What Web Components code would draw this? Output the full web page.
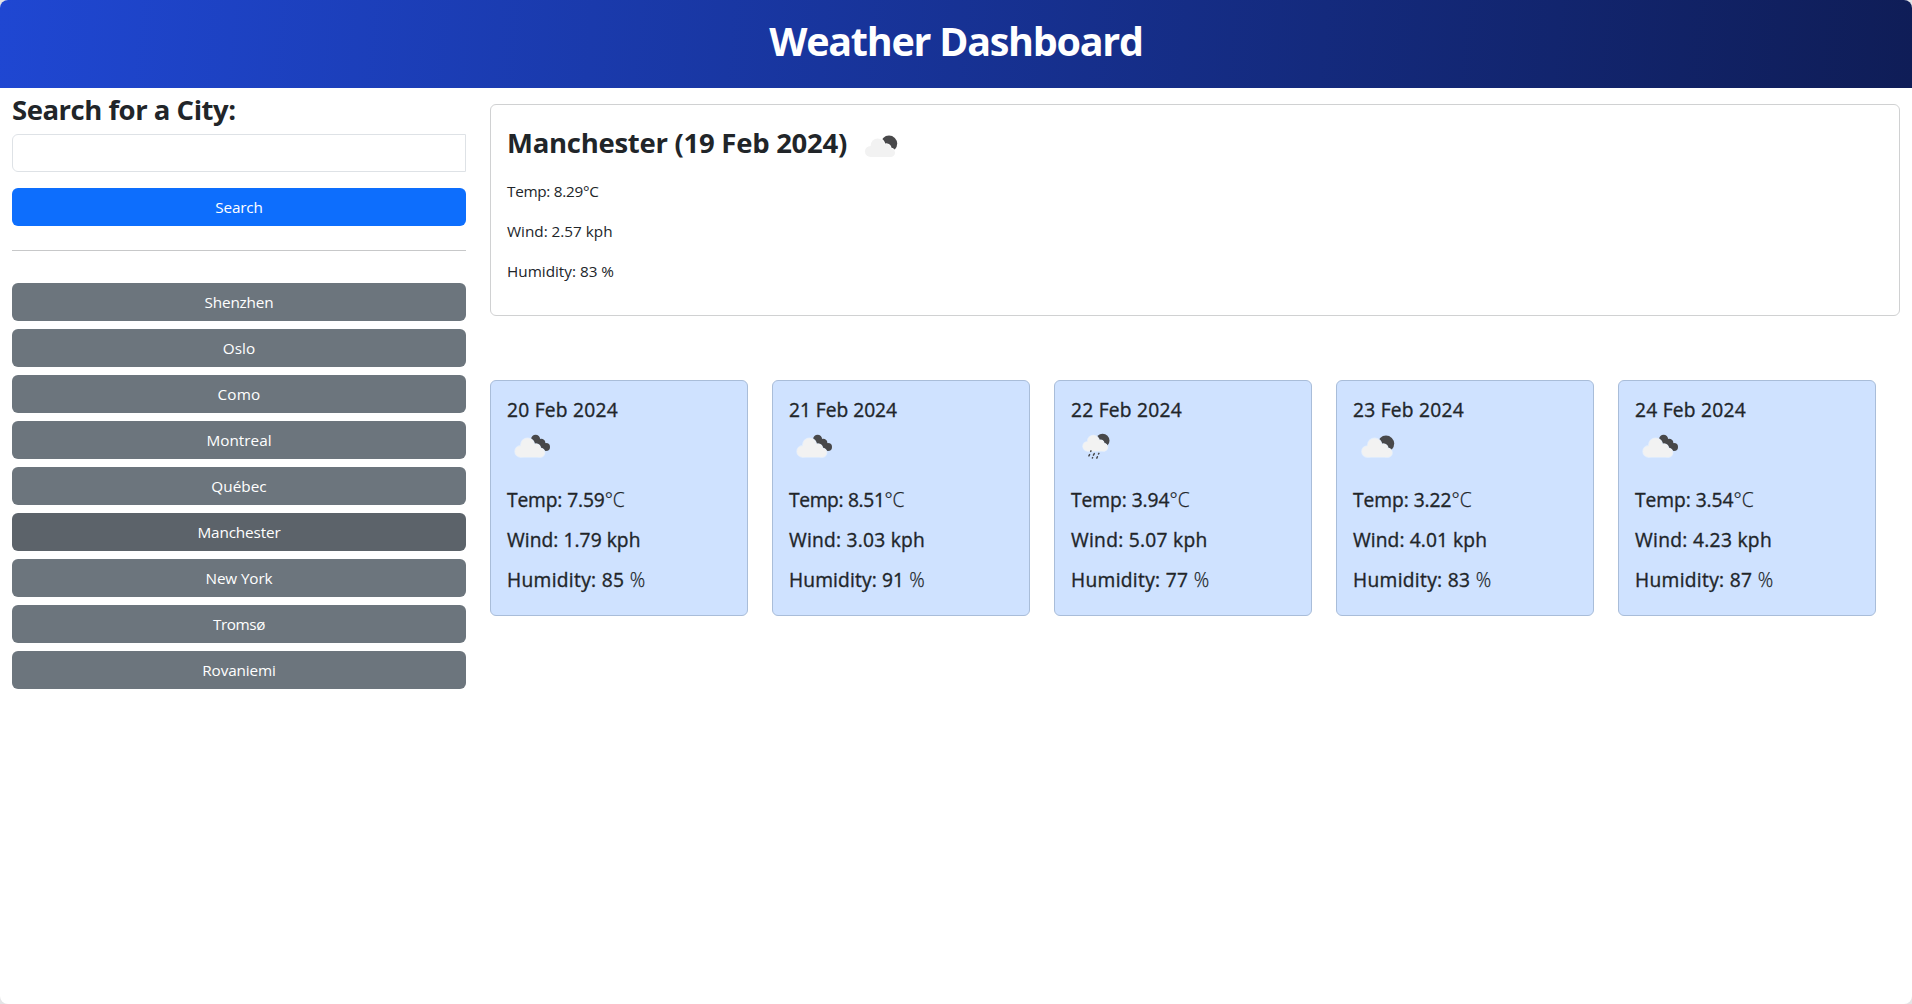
<!DOCTYPE html>
<html lang="en">
<head>
<meta charset="utf-8">
<title>Weather Dashboard</title>
<style>
html{background:#e4e4e6}
body{margin:0;font-family:"Open Sans","Noto Sans",sans-serif;font-size:15.3px;line-height:24px;color:#212529}
</style>
</head>
<body>
<weather-app></weather-app>
<script>
// <fit-text w="120">: a run of text tracked so that its advance equals w pixels.
class FitText extends HTMLElement{
  constructor(){super();this.attachShadow({mode:'open'}).innerHTML='<style>:host{display:inline-block;white-space:pre}</style><slot></slot>';}
  connectedCallback(){
    const w=parseFloat(this.getAttribute('w'));
    const n=this.textContent.length;
    if(!w||!n)return;
    const now=this.getBoundingClientRect().width;
    this.style.letterSpacing=((w-now)/n).toFixed(4)+'px';
  }
}
class WeatherIcon extends HTMLElement{
  connectedCallback(){
    const lobes='<circle cx="12.6" cy="30.4" r="5.5"/><circle cx="19.6" cy="24.1" r="6.8"/><circle cx="28" cy="27.4" r="4.4"/><circle cx="32.2" cy="31.6" r="4.4"/><path d="M12.6 26h14l6 5v5h-20z"/>';
    const cloud=t=>`<g transform="${t}"><g fill="var(--halo)" stroke="var(--halo)" stroke-width="1.6">${lobes}</g><g fill="#f2f2f2">${lobes}</g></g>`;
    const shapes={
      broken:`<g fill="#48484a"><circle cx="27.6" cy="18.2" r="4.5"/><circle cx="33.2" cy="21.9" r="4.2"/><circle cx="38" cy="26.1" r="4"/><path d="M24 20l12-1 2 9-6 1z"/></g>${cloud('')}`,
      few:`<circle cx="32" cy="22.8" r="8.2" fill="#48484a"/>${cloud('translate(.7 .2) scale(1.02 .995)')}`,
      rain:`<circle cx="30.6" cy="19.7" r="6.9" fill="#48484a"/>${cloud('translate(5 -.1) scale(.835)')}<path d="M19 29.8l-.3.6M22.3 32.6l-.9 1.6M26.9 32.3l-.4.7M17.6 33.6l-.7 1.3M25.4 35.8l-.6 1.3M20.6 36.6l-.2.4" stroke="#48484a" stroke-width="1.5" stroke-linecap="round"/>`
    };
    this.attachShadow({mode:'open'}).innerHTML=`<style>:host{display:block;width:50px;height:50px;flex:none}svg{display:block}</style><svg width="50" height="50" viewBox="0 0 50 50">${shapes[this.getAttribute('kind')]}</svg>`;
  }
}
class PageBanner extends HTMLElement{
  connectedCallback(){this.attachShadow({mode:'open'}).innerHTML=`<style>
:host{display:flex;height:88px;box-sizing:border-box;justify-content:center;padding-top:15px;background:linear-gradient(95deg,#1f47d2,#0f1d57);color:#fff}
h1{margin:0;font-size:39.5px;line-height:53px;font-weight:700}</style><h1><slot></slot></h1>`;}
}
class CityButton extends HTMLElement{
  connectedCallback(){this.attachShadow({mode:'open'}).innerHTML=`<style>
:host{display:block}
button{display:block;width:100%;height:38px;border:0;border-radius:6px;padding:0 0 1px;font:inherit;line-height:24px;color:#fff;background:#6c757d}
:host([active]) button{background:#5c636a}
:host([primary]) button{background:#0d6efd}</style><button><slot></slot></button>`;}
}
class CitySearch extends HTMLElement{
  connectedCallback(){
    const cities=[['Shenzhen',69],['Oslo',32.5],['Como',43],['Montreal',65],['Québec',55.5],['Manchester',83],['New York',67],['Tromsø',52],['Rovaniemi',73.5]];
    this.attachShadow({mode:'open'}).innerHTML=`<style>
:host{display:flex;flex-direction:column;width:454px;flex:none}
h2{margin:5px 0 7px;font-size:27.5px;line-height:34px;font-weight:700}
input{display:block;box-sizing:border-box;width:100%;height:38px;border:1px solid #dee2e6;border-radius:6px 0 0 6px;padding:6px 12px;font:inherit;background:#fff}
.go{margin-top:16px}
hr{width:100%;margin:24px 0 32px;border:0;border-top:1px solid #c7c8c9}
.list{display:flex;flex-direction:column;gap:8px}</style>
<h2><fit-text w="223.5">Search for a City:</fit-text></h2><input aria-label="City">
<city-button class="go" primary><fit-text w="47.5">Search</fit-text></city-button><hr>
<div class="list">${cities.map(c=>`<city-button${c[0]==='Manchester'?' active':''}><fit-text w="${c[1]}">${c[0]}</fit-text></city-button>`).join('')}</div>`;
  }
}
class TodayCard extends HTMLElement{
  connectedCallback(){this.attachShadow({mode:'open'}).innerHTML=`<style>
:host{display:block;box-sizing:border-box;height:212px;border:1px solid #d0d1d2;border-radius:6px;padding:16px;--halo:#fff}
.head{display:flex;height:50px;gap:10px}
h2{margin:5px 0 0;font-size:27.5px;line-height:34px;font-weight:700}
p{margin:0 0 16px;font-weight:400;line-height:24px}
.rows{margin-top:8px}</style>
<div class="head"><h2><fit-text w="340">Manchester (19 Feb 2024)</fit-text></h2><weather-icon kind="few"></weather-icon></div>
<div class="rows"><p><fit-text w="91.5">Temp: 8.29°C</fit-text></p><p><fit-text w="105.5">Wind: 2.57 kph</fit-text></p><p><fit-text w="107">Humidity: 83 %</fit-text></p></div>`;}
}
class DayCard extends HTMLElement{
  connectedCallback(){
    const [date,kind,temp,wind,hum]=this.getAttribute('data').split('|');
    const [dw,tw,ww,hw]=this.getAttribute('widths').split(' ');
    this.attachShadow({mode:'open'}).innerHTML=`<style>
:host{display:block;box-sizing:border-box;width:258px;height:236px;border:1px solid #a9bdd9;border-radius:6px;padding:17px 16px 15px;background:#cfe2ff;--halo:#e4eefc;font-size:19.2px;font-weight:500;-webkit-text-stroke:.35px #212529}
h5{margin:0;font:inherit;line-height:24px}
p{margin:0 0 16px;line-height:24px}
weather-icon{margin:-1px 0 17px 1px}
.u{font-weight:300;-webkit-text-stroke:.25px #212529}</style>
<h5><fit-text w="${dw}">${date}</fit-text></h5><weather-icon kind="${kind}"></weather-icon>
<p><fit-text w="${tw}">Temp: ${temp}<span class="u">°C</span></fit-text></p>
<p><fit-text w="${ww}">Wind: ${wind} kph</fit-text></p>
<p><fit-text w="${hw}">Humidity: ${hum} <span class="u">%</span></fit-text></p>`;
  }
}
class WeatherApp extends HTMLElement{
  connectedCallback(){
    this.attachShadow({mode:'open'}).innerHTML=`<style>
:host{display:block;height:1004px;box-sizing:border-box;background:#fff;border-radius:8px;overflow:hidden}
.body{display:flex;gap:24px;padding:0 12px}
main{flex:1;min-width:0;padding-top:16px}
.days{display:flex;gap:24px;margin-top:64px}</style>
<page-banner><fit-text w="373.5">Weather Dashboard</fit-text></page-banner>
<div class="body"><city-search></city-search><main><today-card></today-card><div class="days">
<day-card data="20 Feb 2024|broken|7.59|1.79|85" widths="111 117.5 133.5 138.5"></day-card>
<day-card data="21 Feb 2024|broken|8.51|3.03|91" widths="108 115 136 136"></day-card>
<day-card data="22 Feb 2024|rain|3.94|5.07|77" widths="111 118.5 136.5 138.5"></day-card>
<day-card data="23 Feb 2024|few|3.22|4.01|83" widths="111 118.5 134 138.5"></day-card>
<day-card data="24 Feb 2024|broken|3.54|4.23|87" widths="111 118.5 137 138.5"></day-card>
</div></main></div>`;
  }
}
[['weather-icon',WeatherIcon],['page-banner',PageBanner],['city-button',CityButton],['city-search',CitySearch],['today-card',TodayCard],['day-card',DayCard],['weather-app',WeatherApp],['fit-text',FitText]].forEach(([n,c])=>customElements.define(n,c));
</script>
</body>
</html>
